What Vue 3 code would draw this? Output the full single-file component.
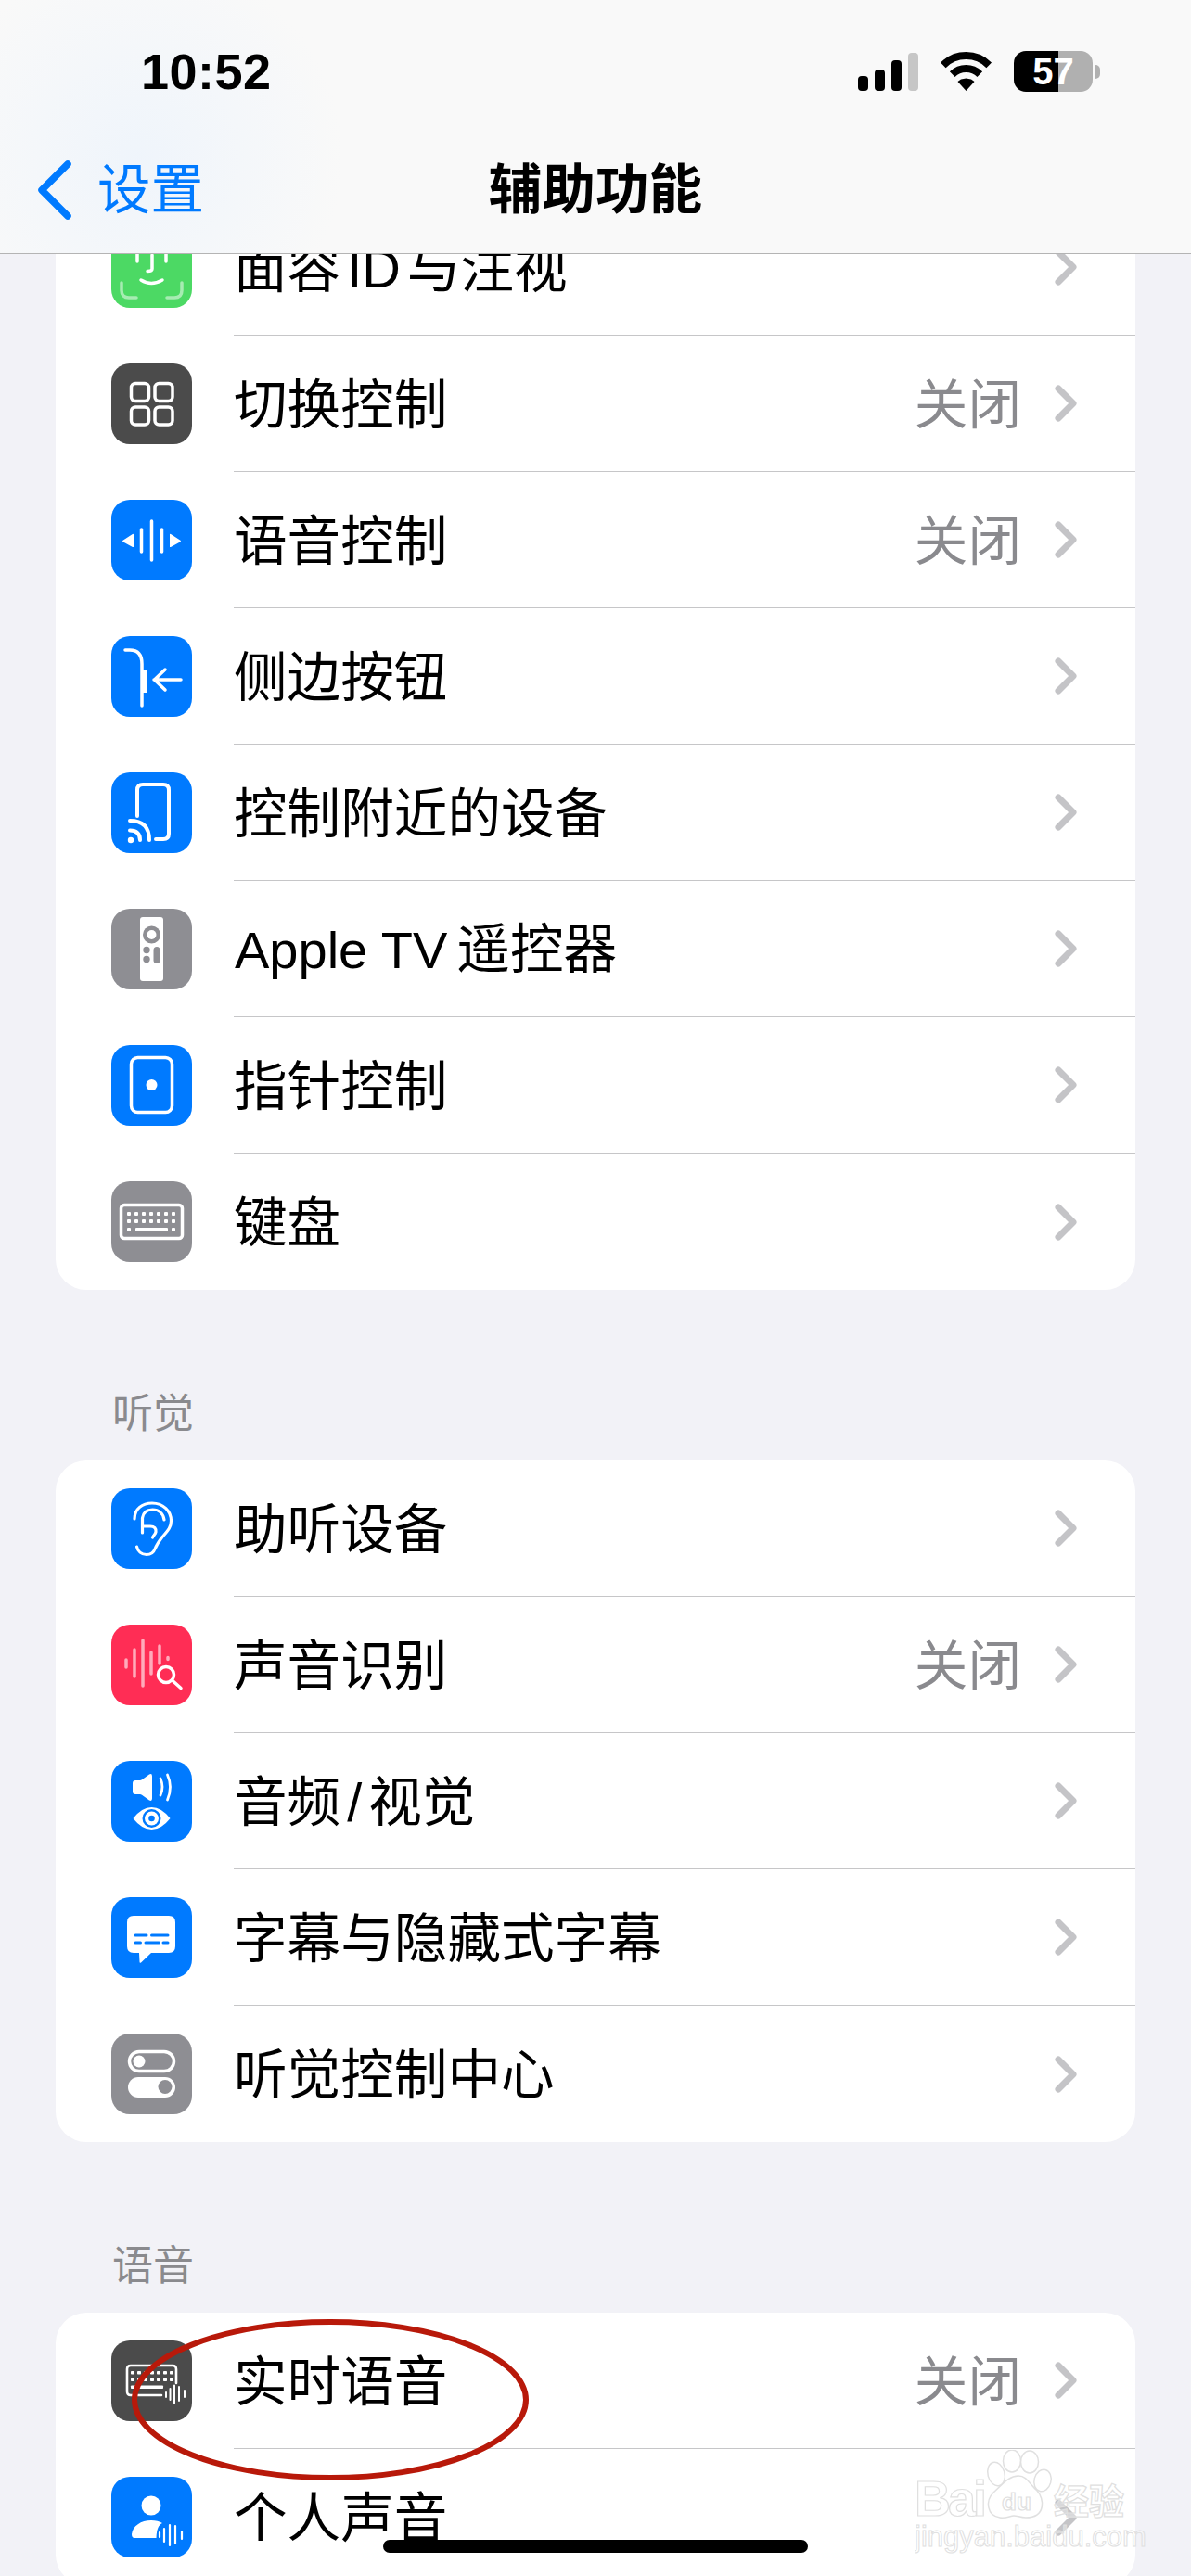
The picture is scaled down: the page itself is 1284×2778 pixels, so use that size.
<script setup>
const groups = [
  {
    rows: [
      { icon: 'face', label: '面容 ID 与注视' },
      { icon: 'switch', label: '切换控制', value: '关闭' },
      { icon: 'voice', label: '语音控制', value: '关闭' },
      { icon: 'side', label: '侧边按钮' },
      { icon: 'nearby', label: '控制附近的设备' },
      { icon: 'remote', latin: 'Apple TV', label: '遥控器' },
      { icon: 'pointer', label: '指针控制' },
      { icon: 'keyboard', label: '键盘' },
    ],
  },
  {
    title: '听觉',
    rows: [
      { icon: 'ear', label: '助听设备' },
      { icon: 'sound', label: '声音识别', value: '关闭' },
      { icon: 'av', label: '音频 / 视觉' },
      { icon: 'captions', label: '字幕与隐藏式字幕' },
      { icon: 'hearing', label: '听觉控制中心' },
    ],
  },
  {
    title: '语音',
    rows: [
      { icon: 'live', label: '实时语音', value: '关闭' },
      { icon: 'personal', label: '个人声音' },
    ],
  },
]

const keyCols = [19, 27, 35, 43, 51, 59, 67]
const liveCols = [23, 30, 37, 44, 51, 58, 65]
</script>

<template>
  <div class="screen">
    <main class="content">
      <section v-for="(group, g) in groups" :key="g" class="group">
        <h2 v-if="group.title" class="group-title">{{ group.title }}</h2>
        <div class="card">
          <div v-for="row in group.rows" :key="row.icon" class="row">
            <svg class="icon" :class="'icon-' + row.icon" viewBox="0 0 87 87" width="87" height="87">
              <rect class="tile" width="87" height="87" rx="20" />
              <template v-if="row.icon === 'face'">
                <g class="ln" stroke-width="3.5">
                  <path d="M28 28v9M59 28v9M44 30v15q0 2.500-5 2.500M32 57q11 7 23 0" />
                  <path opacity=".5" d="M11 60v8q0 8 8 8h8M76 60v8q0 8-8 8h-8M11 27v-8q0-8 8-8h8M76 27v-8q0-8-8-8h-8" />
                </g>
              </template>
              <template v-else-if="row.icon === 'switch'">
                <g class="ln" stroke-width="3.500">
                  <rect x="21.500" y="21.500" width="19" height="19" rx="4.500" />
                  <rect x="47" y="21.500" width="19" height="19" rx="4.500" />
                  <rect x="21.500" y="47" width="19" height="19" rx="4.500" />
                  <rect x="47" y="47" width="19" height="19" rx="4.500" />
                </g>
              </template>
              <template v-else-if="row.icon === 'voice'">
                <path class="ln" stroke-width="3.500" d="M43.500 23v42M32.500 32v24M54.500 32v24" />
                <path class="fl" d="M24 37.500v13q0 1-1.500.300l-10-5.500q-1-.800 0-1.600l10-6.500q1.500-.800 1.500.300zM63 37.500v13q0 1 1.500.300l10-5.500q1-.800 0-1.600l-10-6.500q-1.500-.800-1.500.300z" />
              </template>
              <template v-else-if="row.icon === 'side'">
                <path class="ln" stroke-width="3.500" d="M15 15h5q13 0 13 15v45M46 47h29M58 36L46.500 47 58 58" />
                <rect class="fl" x="33" y="36" width="5" height="25" />
              </template>
              <template v-else-if="row.icon === 'nearby'">
                <path class="ln" stroke-width="4" d="M28 47V19q0-6 6-6h22q6 0 6 6v47q0 6-6 6h-8" stroke-linecap="butt" />
                <path class="ln" stroke-width="4" d="M20 52q21 0 21 21M20 62.500q11 0 11 10.500" stroke-linecap="butt" />
                <circle class="fl" cx="21" cy="73" r="3.200" />
              </template>
              <template v-else-if="row.icon === 'remote'">
                <rect class="fl" x="31" y="9" width="25" height="69" rx="3" />
                <circle class="cut" cx="43.500" cy="28" r="9.500" />
                <circle class="fl" cx="43.500" cy="28" r="5" />
                <circle class="cut" cx="38" cy="44.500" r="3.700" />
                <circle class="cut" cx="38" cy="54.500" r="3.700" />
                <rect class="cut" x="45.500" y="41" width="7" height="18" rx="3.500" />
              </template>
              <template v-else-if="row.icon === 'pointer'">
                <rect class="ln" stroke-width="3.500" x="21.500" y="13.500" width="44" height="59" rx="7" />
                <circle class="fl" cx="43.500" cy="43" r="6" />
              </template>
              <template v-else-if="row.icon === 'keyboard'">
                <rect class="ln" stroke-width="3.500" x="10.500" y="25.500" width="66" height="36" rx="3.500" />
                <g v-for="y in [33, 41]" :key="y">
                  <rect v-for="x in keyCols" :key="x" class="fl" :x="x - 2" :y="y" width="4" height="4" rx="1" />
                </g>
                <rect class="fl" x="17" y="50" width="4" height="4" rx="1" />
                <rect class="fl" x="26" y="50" width="35" height="4" rx="1" />
                <rect class="fl" x="65" y="50" width="4" height="4" rx="1" />
              </template>
              <template v-else-if="row.icon === 'ear'">
                <g class="ln" stroke-width="3.200">
                  <path d="M25 33c0-11 8.500-17 19-17 12 0 20.500 8.500 20.500 19 0 8-5 12-9.500 17.500-4 5-6 8-8 13-1.500 4-4.500 6-9 6-5.500 0-9.500-3.500-10.500-8.500" />
                  <path d="M33.500 48V32c1-6 5-9 11-9 6.500 0 11.500 4 12.500 11" />
                  <path d="M34 41h8c4.500 0 6.500 2.500 6 6-.3 2-2.500 4-3.500 6" />
                </g>
              </template>
              <template v-else-if="row.icon === 'sound'">
                <path class="ln" opacity=".6" stroke-width="3.500" d="M16 38v8M25 27v29M34 17v49M43 30v23M52 23v19M61 35.500v2" />
                <g class="ln" stroke-width="3.500">
                  <circle cx="59" cy="54" r="8.500" />
                  <path d="M65.500 60l9.500 8.500" />
                </g>
              </template>
              <template v-else-if="row.icon === 'av'">
                <path class="fl" d="M26 21h5q1 0 2-.8l8-5.700q3-1.500 3 2v24q0 3.500-3 2l-8-5.700q-1-.8-2-.8h-5q-3 0-3-3V24q0-3 3-3z" />
                <path class="ln" stroke-width="2.800" d="M53 19q4 9 0 18M60.500 15q6 13 0 27" />
                <path class="fl" d="M23.500 62Q33 50 43.500 50T63.500 62Q54 74 43.500 74T23.500 62z" />
                <circle class="blue" cx="43.500" cy="62" r="10" />
                <circle class="fl" cx="43.500" cy="62" r="7.500" />
                <circle class="blue" cx="43.500" cy="62" r="3.300" />
              </template>
              <template v-else-if="row.icon === 'captions'">
                <path class="fl" d="M24 20h38q7 0 7 7v26q0 7-7 7H43L32 70.500q-1.500.8-1.500-1L30 60h-6q-7 0-7-7V27q0-7 7-7z" />
                <path class="blue-ln" stroke-width="3" d="M26 41h12M43.500 41h17.500M26 49h5.500M37 49h14.500M56 49h5" />
              </template>
              <template v-else-if="row.icon === 'hearing'">
                <rect class="ln" stroke-width="3.500" x="19.500" y="19.500" width="48" height="21" rx="10.500" />
                <circle class="fl" cx="30" cy="30" r="6.500" />
                <rect class="fl" x="18" y="47" width="51" height="22" rx="11" />
                <circle class="cut" cx="58" cy="57.500" r="7.500" />
              </template>
              <template v-else-if="row.icon === 'live'">
                <path class="ln" stroke-width="2.600" stroke-linecap="butt" d="M54 59H21q-4 0-4-4V31q0-4 4-4h45q4 0 4 4v15" />
                <g v-for="y in [33, 40.500]" :key="y">
                  <rect v-for="x in liveCols" :key="x" class="fl" :x="x - 2" :y="y" width="4" height="3.500" rx=".8" />
                </g>
                <rect class="fl" x="21" y="48.500" width="35" height="3.500" rx=".8" />
                <path class="ln" stroke-width="2" d="M59 56v5M63.500 52v12M68 48.500v19M73 50v15M79 54v7" />
              </template>
              <template v-else-if="row.icon === 'personal'">
                <circle class="fl" cx="43" cy="31" r="10.500" />
                <path class="fl" d="M22 62c1-9 10-15 21-15 5 0 9 1 12 3-4 2-6 6-6.500 16H25q-3 0-3-4z" />
                <path class="ln" stroke-width="2.200" d="M52 60v5M57 56v14M63 52v22M69 53v19M76 59v8" />
              </template>
            </svg>
            <div class="row-body">
              <span class="label"><span v-if="row.latin" class="latin">{{ row.latin }}</span>{{ row.latin ? ' ' : '' }}{{ row.label }}</span>
              <span v-if="row.value" class="value">{{ row.value }}</span>
              <svg class="chevron" viewBox="0 0 24 40" width="24" height="40">
                <path d="M4 4l16 16L4 36" />
              </svg>
            </div>
          </div>
        </div>
      </section>
    </main>

    <header class="top">
      <div class="status">
        <span class="time">10:52</span>
        <div class="status-right">
          <div class="signal">
            <i class="b1"></i><i class="b2"></i><i class="b3"></i><i class="b4"></i>
          </div>
          <svg class="wifi" viewBox="0 0 57 42" width="57" height="42">
            <path d="M3.800 14.300A35 35 0 0 1 53.200 14.300M13.700 24.200A21 21 0 0 1 43.300 24.200" />
            <polygon points="28.500,42 19.500,32 23,29.500 28.500,28.500 34,29.500 37.500,32" />
          </svg>
          <div class="battery"><span>57</span></div>
          <i class="nub"></i>
        </div>
      </div>
      <nav class="navbar">
        <div class="back">
          <svg viewBox="0 0 38 64" width="38" height="64">
            <path d="M33 4L5 32l28 28" />
          </svg>
          <span>设置</span>
        </div>
        <h1 class="title">辅助功能</h1>
        <div></div>
      </nav>
    </header>

    <svg class="mark" viewBox="0 0 450 200" width="450" height="200">
      <ellipse cx="226" cy="98" rx="211" ry="84" />
    </svg>

    <svg class="watermark" viewBox="0 0 250 112" width="250" height="112">
      <text x="0" y="71" class="wm-bai">Bai</text>
      <ellipse class="wm" cx="88" cy="26" rx="9" ry="13" transform="rotate(-15 88 26)" />
      <ellipse class="wm" cx="105" cy="12" rx="9.500" ry="12" />
      <ellipse class="wm" cx="124" cy="13" rx="9.500" ry="12" />
      <ellipse class="wm" cx="138" cy="33" rx="9" ry="12" transform="rotate(15 138 33)" />
      <path class="wm" d="M112 28c9 0 12 9 20 16 8 8 10 29-12 29-6 0-9-2-13-2s-8 3-15 2c-14-2-16-18-7-27 9-8 16-18 27-18z" />
      <text x="94" y="65" class="wm-du">du</text>
      <text x="150" y="69" class="wm-cn">经验</text>
      <text x="0" y="104" class="wm-url">jingyan.baidu.com</text>
    </svg>

    <div class="home"></div>
  </div>
</template>

<style scoped>
.screen {
  position: relative;
  width: 1284px;
  height: 2778px;
  overflow: hidden;
  background: #f2f2f7;
  font-family: "Liberation Sans", "Noto Sans CJK SC", sans-serif;
  color: #000;
}
.content {
  padding: 215px 60px 0;
}
.group-title {
  margin: 0 0 20px;
  padding: 104px 0 0 61px;
  font-size: 44px;
  font-weight: 400;
  line-height: 60px;
  color: #8a8a8e;
}
.card {
  background: #fff;
  border-radius: 33px;
  overflow: hidden;
}
.row {
  display: flex;
  align-items: center;
  height: 147px;
  padding-left: 60px;
  gap: 45px;
}
.icon {
  flex: none;
}
.tile {
  fill: #007aff;
}
.icon-face .tile { fill: #4cd964; }
.icon-switch .tile,
.icon-live .tile { fill: #4b4b4b; }
.icon-remote .tile,
.icon-keyboard .tile,
.icon-hearing .tile { fill: #8e8e93; }
.icon-sound .tile { fill: #ff2d55; }
.ln {
  fill: none;
  stroke: #fff;
  stroke-linecap: round;
  stroke-linejoin: round;
}
.icon-sound g.ln circle { fill: #ff2d55; }
.blue { fill: #007aff; }
.blue-ln {
  fill: none;
  stroke: #007aff;
  stroke-linecap: round;
}
.fl { fill: #fff; }
.cut { fill: #8e8e93; }
.row-body {
  flex: 1;
  align-self: stretch;
  display: flex;
  align-items: center;
  padding-right: 63px;
  box-sizing: border-box;
  border-bottom: 1px solid #c6c6c8;
}
.row:last-child .row-body {
  border-bottom: 0;
}
.label {
  flex: 1;
  padding-top: 3px;
  font-size: 57.6px;
  line-height: 70px;
  word-spacing: -9px;
  white-space: nowrap;
}
.latin {
  margin-left: 1px;
  margin-right: 3px;
  font-size: 56px;
  word-spacing: 0;
}
.value {
  padding-top: 3px;
  margin-right: 36px;
  font-size: 57.6px;
  line-height: 70px;
  color: #8a8a8e;
}
.chevron {
  flex: none;
}
.chevron path {
  fill: none;
  stroke: #c4c4c7;
  stroke-width: 7;
  stroke-linecap: round;
  stroke-linejoin: round;
}
.top {
  position: absolute;
  top: 0;
  left: 0;
  width: 100%;
  height: 274px;
  box-sizing: border-box;
  background:
    radial-gradient(circle at 150px 170px, rgba(235, 243, 252, 0.7), rgba(249, 249, 249, 0) 220px),
    #f9f9f9;
  border-bottom: 1px solid #b4b4b4;
}
.status {
  height: 153px;
  display: flex;
  align-items: center;
  justify-content: space-between;
  padding: 0 98px 0 152px;
}
.time {
  font-size: 54px;
  font-weight: 700;
  line-height: 60px;
  letter-spacing: 0.5px;
}
.status-right {
  display: flex;
  align-items: flex-end;
  height: 44px;
}
.signal {
  display: flex;
  align-items: flex-end;
  gap: 7px;
  margin-right: 23px;
  height: 41px;
  margin-bottom: 1px;
}
.signal i {
  display: block;
  width: 11px;
  border-radius: 4px;
  background: #000;
}
.signal .b1 { height: 16px; }
.signal .b2 { height: 23px; }
.signal .b3 { height: 33px; }
.signal .b4 { height: 41px; background: #c6c6c6; }
.wifi {
  margin-right: 23px;
  margin-bottom: 1px;
}
.wifi path {
  fill: none;
  stroke: #000;
  stroke-width: 8;
}
.wifi polygon {
  fill: #000;
}
.battery {
  width: 85px;
  height: 44px;
  border-radius: 13px;
  background: linear-gradient(90deg, #000 0, #000 48px, #b0b0b0 48px, #b0b0b0 100%);
  display: flex;
  align-items: center;
  justify-content: center;
}
.battery span {
  color: #fff;
  font-size: 40px;
  font-weight: 700;
  line-height: 44px;
}
.nub {
  display: block;
  width: 5px;
  height: 15px;
  margin: 0 0 14px 3px;
  border-radius: 0 8px 8px 0;
  background: #b0b0b0;
}
.navbar {
  height: 104px;
  display: grid;
  grid-template-columns: 1fr auto 1fr;
  align-items: center;
}
.back {
  display: flex;
  align-items: center;
  gap: 27px;
  padding-left: 40px;
  color: #007aff;
  font-size: 57.6px;
  line-height: 70px;
}
.back path {
  fill: none;
  stroke: #007aff;
  stroke-width: 7.5;
  stroke-linecap: round;
  stroke-linejoin: round;
}
.title {
  margin: 0;
  font-size: 57.6px;
  font-weight: 700;
  line-height: 70px;
}
.mark {
  position: absolute;
  left: 130px;
  top: 2490px;
}
.mark ellipse {
  fill: none;
  stroke: #b8190a;
  stroke-width: 6;
}
.watermark {
  position: absolute;
  left: 986px;
  top: 2642px;
}
.wm {
  fill: rgba(255, 255, 255, 0.35);
  stroke: #e0e0e0;
  stroke-width: 1.500;
}
.wm-bai,
.wm-du,
.wm-cn,
.wm-url {
  fill: rgba(255, 255, 255, 0.35);
  stroke: #e0e0e0;
  stroke-width: 1.200;
  font-family: "Liberation Sans", "Noto Sans CJK SC", sans-serif;
}
.wm-bai {
  font-size: 54px;
  font-weight: 700;
  letter-spacing: -3px;
}
.wm-du {
  font-size: 26px;
  font-weight: 700;
}
.wm-cn {
  font-size: 38px;
  font-weight: 700;
}
.wm-url {
  font-size: 31px;
  stroke-width: 1;
}
.home {
  position: absolute;
  left: 413px;
  bottom: 25px;
  width: 458px;
  height: 14px;
  border-radius: 7px;
  background: #000;
}
</style>
